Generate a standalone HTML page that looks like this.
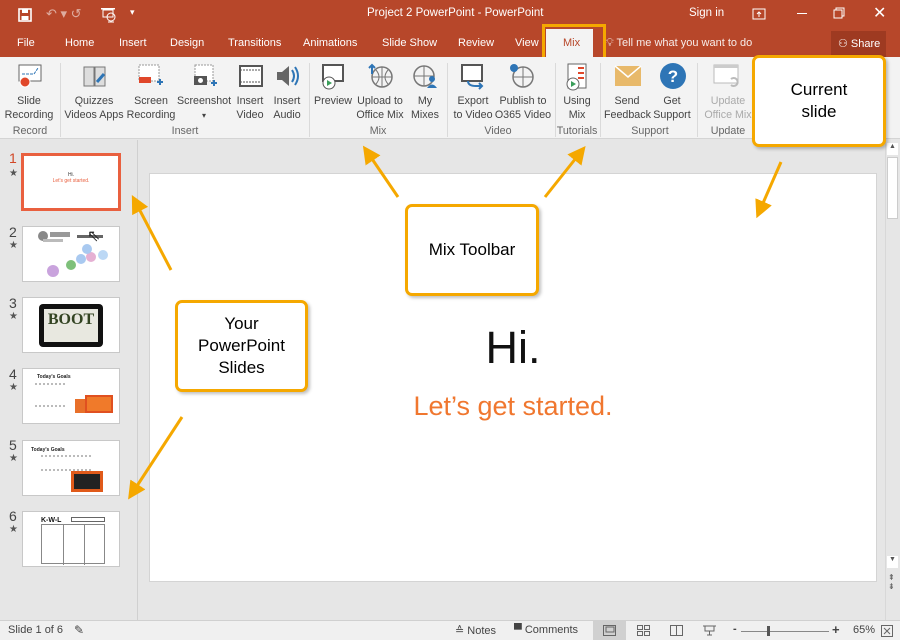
<!DOCTYPE html>
<html><head><meta charset="utf-8"><style>
*{margin:0;padding:0;box-sizing:border-box}
body{width:900px;height:640px;overflow:hidden;background:#e6e6e6;font-family:"Segoe UI","Liberation Sans",sans-serif;position:relative;color:#444}
.a{position:absolute}
#top{left:0;top:0;width:900px;height:57px;background:#b7472a;color:#fff}
.t{position:absolute;font-size:11px;color:#fff;white-space:nowrap}
#rib{left:0;top:57px;width:900px;height:82px;background:#f3f3f3;border-bottom:1px solid #d4d4d4}
.lb{position:absolute;font-size:10.7px;color:#444;text-align:center;line-height:14px;white-space:nowrap}
.gl{position:absolute;top:68px;font-size:10.7px;color:#666;text-align:center}
.sep{position:absolute;top:6px;width:1px;height:74px;background:#dadada}
.ic{position:absolute}
.callout{position:absolute;background:#fff;border:3px solid #f5a800;border-radius:7px;box-shadow:2px 2px 3px rgba(0,0,0,.25);font-family:"Liberation Sans",sans-serif;color:#000;font-size:17px;text-align:center;display:flex;align-items:center;justify-content:center;line-height:22px}
.th{position:absolute;left:22px;width:98px;height:56px;background:#fff;border:1px solid #c8c8c8}
.num{position:absolute;left:9px;font-size:14px;color:#444}
.star{position:absolute;left:9px;font-size:10px;color:#555}
#status{left:0;top:620px;width:900px;height:20px;background:#f0f0f0;border-top:1px solid #d0d0d0;font-size:11px;color:#444}
</style></head><body>
<div id="top" class="a">
 <svg class="a" style="left:18px;top:8px" width="14" height="14"><rect x="1" y="1" width="12" height="12" fill="none" stroke="#fff" stroke-width="1.6"/><rect x="4" y="1" width="6" height="4" fill="#fff"/><rect x="3.5" y="8" width="7" height="4" fill="#fff"/></svg>
 <div class="t" style="left:46px;top:6px;opacity:.55;font-size:13px">↶ ▾ ↺</div>
 <svg class="a" style="left:100px;top:7px" width="16" height="16"><rect x="1" y="1" width="14" height="1.5" fill="#fff"/><rect x="3" y="3" width="10" height="7" fill="none" stroke="#fff"/><circle cx="11" cy="10" r="4" fill="none" stroke="#fff"/><path d="M8 15h6" stroke="#fff"/></svg>
 <div class="t" style="left:130px;top:7px;font-size:9px">▾</div>
 <div class="t" style="left:367px;top:7px;font-size:11.5px">Project 2 PowerPoint  -  PowerPoint</div>
 <div class="t" style="left:689px;top:7px;font-size:11.5px">Sign in</div>
 <svg class="a" style="left:752px;top:8px" width="14" height="12"><rect x="1" y="1" width="12" height="10" fill="none" stroke="#fff"/><path d="M7 9V4M5 6l2-2 2 2" stroke="#fff" fill="none"/></svg>
 <div class="a" style="left:797px;top:13px;width:10px;height:1px;background:#fff"></div>
 <svg class="a" style="left:833px;top:7px" width="12" height="12"><rect x="1" y="3" width="8" height="8" fill="none" stroke="#fff"/><path d="M3 3V1h8v8H9" fill="none" stroke="#fff"/></svg>
 <div class="t" style="left:873px;top:3px;font-size:16px">✕</div>
 <div class="t" style="left:17px;top:37px">File</div>
 <div class="t" style="left:65px;top:37px">Home</div>
 <div class="t" style="left:119px;top:37px">Insert</div>
 <div class="t" style="left:170px;top:37px">Design</div>
 <div class="t" style="left:228px;top:37px">Transitions</div>
 <div class="t" style="left:303px;top:37px">Animations</div>
 <div class="t" style="left:382px;top:37px">Slide Show</div>
 <div class="t" style="left:458px;top:37px">Review</div>
 <div class="t" style="left:515px;top:37px">View</div>
 <div class="a" style="left:546px;top:29px;width:47px;height:28px;background:#f3f3f3"></div>
 <div class="t" style="left:563px;top:37px;color:#b7472a">Mix</div>
 <div class="t" style="left:606px;top:37px;opacity:.9">💡︎ Tell me what you want to do</div>
 <div class="a" style="left:831px;top:31px;width:55px;height:26px;background:#9e3a21"></div>
 <div class="t" style="left:838px;top:37px">⚇ Share</div>
</div>
<div class="a" style="left:542px;top:24px;width:64px;height:36px;border:3px solid #f5a800"></div>

<div id="rib" class="a">
 <svg class="ic" style="left:17px;top:6px" width="26" height="26"><rect x="2" y="2" width="22" height="16" fill="#fff" stroke="#666"/><path d="M5 11h12l4-6" stroke="#2e75b6" fill="none" stroke-dasharray="3 1"/><circle cx="8" cy="19" r="5" fill="#e0472a" stroke="#fff"/></svg>
 <svg class="ic" style="left:82px;top:7px" width="26" height="24"><path d="M2 3h10v19H2zM13 3h10v19H13z" fill="#ddd" stroke="#777"/><path d="M15 18l7-8" stroke="#2e75b6" stroke-width="3"/></svg>
 <svg class="ic" style="left:137px;top:7px" width="26" height="24"><rect x="2" y="1" width="20" height="16" fill="#fff" stroke="#999" stroke-dasharray="2 1"/><rect x="2" y="13" width="12" height="6" fill="#e0472a"/><path d="M20 18h6M23 15v6" stroke="#2e75b6" stroke-width="2"/></svg>
 <svg class="ic" style="left:192px;top:7px" width="26" height="24"><rect x="3" y="1" width="18" height="16" fill="#fff" stroke="#999" stroke-dasharray="2 1"/><rect x="2" y="12" width="13" height="9" fill="#555"/><circle cx="8.5" cy="16.5" r="2.5" fill="#fff"/><path d="M19 19h6M22 16v6" stroke="#2e75b6" stroke-width="2"/></svg>
 <svg class="ic" style="left:239px;top:8px" width="24" height="22"><rect x="1" y="1" width="22" height="20" fill="#fff" stroke="#555" stroke-width="2"/><path d="M1 5h22M1 17h22" stroke="#555" stroke-dasharray="2 1"/></svg>
 <svg class="ic" style="left:275px;top:6px" width="26" height="26"><path d="M2 9h5l7-6v20l-7-6H2z" fill="#666"/><path d="M17 7q4 6 0 12M20 4q6 9 0 18" stroke="#2e75b6" stroke-width="2" fill="none"/></svg>
 <svg class="ic" style="left:321px;top:7px" width="24" height="26"><rect x="2" y="1" width="20" height="16" fill="#fff" stroke="#555" stroke-width="2"/><circle cx="8" cy="19" r="6" fill="#fff" stroke="#555"/><path d="M6 16v6l5-3z" fill="#3a9e5a"/></svg>
 <svg class="ic" style="left:367px;top:6px" width="26" height="26"><circle cx="15" cy="14" r="10" fill="none" stroke="#777" stroke-width="1.5"/><path d="M5 14h20M15 4v20M9 7q6 7 0 14M21 7q-6 7 0 14" stroke="#777" fill="none"/><path d="M5 11V2M2 5l3-3 3 3" stroke="#2e75b6" stroke-width="2" fill="none"/></svg>
 <svg class="ic" style="left:412px;top:6px" width="26" height="26"><circle cx="12" cy="13" r="10" fill="none" stroke="#777" stroke-width="1.5"/><path d="M2 13h20M12 3v20" stroke="#777"/><circle cx="20" cy="16" r="3" fill="#2e75b6"/><path d="M15 25q5-7 10 0z" fill="#2e75b6"/></svg>
 <svg class="ic" style="left:460px;top:7px" width="26" height="26"><rect x="2" y="1" width="20" height="16" fill="#fff" stroke="#555" stroke-width="2"/><path d="M8 17q0 5 8 5h6M19 19l3 3-3 3" stroke="#2e75b6" stroke-width="2" fill="none"/></svg>
 <svg class="ic" style="left:508px;top:6px" width="26" height="26"><circle cx="15" cy="14" r="10" fill="none" stroke="#777" stroke-width="1.5"/><path d="M5 14h20M15 4v20" stroke="#777"/><circle cx="6" cy="5" r="4" fill="#2e75b6"/></svg>
 <svg class="ic" style="left:565px;top:6px" width="24" height="28"><rect x="3" y="1" width="18" height="24" fill="#fff" stroke="#666"/><path d="M13 5h6M13 10h6M13 15h6" stroke="#e0472a" stroke-width="2"/><circle cx="8" cy="21" r="6" fill="#fff" stroke="#666"/><path d="M6 18v6l5-3z" fill="#3a9e5a"/></svg>
 <svg class="ic" style="left:614px;top:8px" width="28" height="22"><rect x="1" y="1" width="26" height="20" fill="#e8b96a"/><path d="M1 1l13 11L27 1" stroke="#fff" fill="none" stroke-width="1.5"/></svg>
 <svg class="ic" style="left:659px;top:5px" width="28" height="28"><circle cx="14" cy="14" r="13" fill="#2e75b6"/><text x="14" y="20" font-size="17" font-weight="bold" text-anchor="middle" fill="#fff" font-family="Liberation Sans">?</text></svg>
 <svg class="ic" style="left:713px;top:7px" width="28" height="26"><rect x="1" y="1" width="24" height="18" fill="#fff" stroke="#bbb"/><rect x="1" y="1" width="24" height="3" fill="#ccc"/><path d="M18 15a4 4 0 1 1 0 6" stroke="#bbb" stroke-width="2" fill="none"/></svg>
 <div class="lb" style="left:4px;top:37px;width:50px">Slide<br>Recording</div>
 <div class="lb" style="left:64px;top:37px;width:60px">Quizzes<br>Videos Apps</div>
 <div class="lb" style="left:124px;top:37px;width:54px">Screen<br>Recording</div>
 <div class="lb" style="left:177px;top:37px;width:54px">Screenshot<br><span style="font-size:8px">▾</span></div>
 <div class="lb" style="left:235px;top:37px;width:30px">Insert<br>Video</div>
 <div class="lb" style="left:271px;top:37px;width:32px">Insert<br>Audio</div>
 <div class="lb" style="left:314px;top:37px;width:38px">Preview</div>
 <div class="lb" style="left:354px;top:37px;width:52px">Upload to<br>Office Mix</div>
 <div class="lb" style="left:409px;top:37px;width:32px">My<br>Mixes</div>
 <div class="lb" style="left:450px;top:37px;width:46px">Export<br>to Video</div>
 <div class="lb" style="left:494px;top:37px;width:58px">Publish to<br>O365 Video</div>
 <div class="lb" style="left:560px;top:37px;width:34px">Using<br>Mix</div>
 <div class="lb" style="left:604px;top:37px;width:46px">Send<br>Feedback</div>
 <div class="lb" style="left:650px;top:37px;width:44px">Get<br>Support</div>
 <div class="lb" style="left:702px;top:37px;width:52px;color:#aaa">Update<br>Office Mix</div>
 <div class="gl" style="left:10px;width:40px">Record</div>
 <div class="gl" style="left:160px;width:50px">Insert</div>
 <div class="gl" style="left:365px;width:26px">Mix</div>
 <div class="gl" style="left:478px;width:40px">Video</div>
 <div class="gl" style="left:555px;width:44px">Tutorials</div>
 <div class="gl" style="left:628px;width:44px">Support</div>
 <div class="gl" style="left:706px;width:44px">Update</div>
 <div class="sep" style="left:60px"></div><div class="sep" style="left:309px"></div><div class="sep" style="left:447px"></div><div class="sep" style="left:555px"></div><div class="sep" style="left:600px"></div><div class="sep" style="left:697px"></div>
</div>

<div class="a" style="left:137px;top:140px;width:1px;height:480px;background:#d0d0d0"></div>
<div class="a" style="left:0;top:140px;width:137px;height:480px;background:#e6e6e6"></div>
<div class="num" style="top:150px;color:#d24726">1</div><div class="star" style="top:168px">★</div>
<div class="th" style="left:21px;top:153px;width:100px;height:58px;border:3px solid #e9603f;text-align:center;font-size:5px;color:#333;padding-top:16px;font-family:'Liberation Sans'">Hi.<br><span style="color:#e9603f">Let's get started.</span></div>
<div class="num" style="top:224px">2</div><div class="star" style="top:240px">★</div>
<div class="th" style="top:226px"><svg width="96" height="54"><circle cx="20" cy="9" r="5" fill="#888"/><rect x="27" y="5" width="20" height="5" fill="#999"/><rect x="20" y="12" width="20" height="3" fill="#bbb"/><rect x="54" y="8" width="26" height="3" fill="#666"/><circle cx="30" cy="44" r="6" fill="#c9a3dd"/><circle cx="48" cy="38" r="5" fill="#7ec07a"/><circle cx="58" cy="32" r="5" fill="#a9c9f0"/><circle cx="68" cy="30" r="5" fill="#e5b0d3"/><circle cx="80" cy="28" r="5" fill="#bcd8f5"/><circle cx="64" cy="22" r="5" fill="#a9c9f0"/></svg></div>
<div class="a" style="left:87px;top:226px;font-size:16px;color:#222">⇖</div>
<div class="num" style="top:295px">3</div><div class="star" style="top:311px">★</div>
<div class="th" style="top:297px"><div class="a" style="left:16px;top:6px;width:64px;height:43px;background:#111;border-radius:4px;padding:5px"><div style="background:#e8e8e0;width:100%;height:100%;font:bold 16px 'Liberation Serif';color:#334422;text-align:center;line-height:22px">BOOT</div></div></div>
<div class="num" style="top:366px">4</div><div class="star" style="top:382px">★</div>
<div class="th" style="top:368px"><div class="a" style="left:14px;top:5px;font-size:5px;font-weight:bold;color:#222">Today's Goals</div><div class="a" style="left:12px;top:14px;width:30px;height:24px;border-top:2px dotted #bbb;border-bottom:2px dotted #bbb"></div><div class="a" style="left:52px;top:30px;width:26px;height:14px;background:#e8702a"></div><div class="a" style="left:62px;top:26px;width:28px;height:18px;background:#f07a2a;border:2px solid #e05020"></div></div>
<div class="num" style="top:437px">5</div><div class="star" style="top:453px">★</div>
<div class="th" style="top:440px"><div class="a" style="left:8px;top:6px;font-size:5px;font-weight:bold;color:#222">Today's Goals</div><div class="a" style="left:18px;top:14px;width:50px;height:16px;border-top:2px dotted #bbb;border-bottom:2px dotted #bbb"></div><div class="a" style="left:48px;top:30px;width:32px;height:21px;background:#e05a1a;padding:3px"><div style="background:#222;height:100%"></div></div></div>
<div class="num" style="top:508px">6</div><div class="star" style="top:524px">★</div>
<div class="th" style="top:511px"><div class="a" style="left:18px;top:5px;font:bold 7px 'Liberation Sans';color:#111">K-W-L</div><div class="a" style="left:48px;top:5px;width:34px;height:5px;border:1px solid #666"></div><div class="a" style="left:18px;top:12px;width:64px;height:40px;border:1px solid #888"><div class="a" style="left:21px;top:0;width:1px;height:40px;background:#888"></div><div class="a" style="left:42px;top:0;width:1px;height:40px;background:#888"></div></div></div>

<div class="a" style="left:149px;top:173px;width:728px;height:409px;background:#fff;border:1px solid #d4d4d4"></div>
<div class="a" style="left:149px;top:322px;width:728px;text-align:center;font-family:'Liberation Sans',sans-serif;font-size:45px;color:#111">Hi.</div>
<div class="a" style="left:149px;top:391px;width:728px;text-align:center;font-family:'Liberation Sans',sans-serif;font-size:27px;color:#f0772f">Let’s get started.</div>

<div class="a" style="left:885px;top:140px;width:15px;height:480px;background:#e6e6e6;border-left:1px solid #d8d8d8"></div>
<div class="a" style="left:887px;top:143px;width:11px;height:12px;background:#fff;font-size:7px;text-align:center;color:#555">▲</div>
<div class="a" style="left:887px;top:157px;width:11px;height:62px;background:#fff;border:1px solid #ccc"></div>
<div class="a" style="left:887px;top:556px;width:11px;height:12px;background:#fff;font-size:7px;text-align:center;color:#555">▼</div>
<div class="a" style="left:888px;top:573px;font-size:8px;color:#555;line-height:9px">⇞<br>⇟</div>

<div id="status" class="a">
 <div class="a" style="left:8px;top:3px">Slide 1 of 6</div>
 <div class="a" style="left:74px;top:2px;font-size:12px">✎</div>
 <div class="a" style="left:455px;top:3px">≙ Notes</div>
 <div class="a" style="left:514px;top:3px">▀ Comments</div>
 <div class="a" style="left:593px;top:0;width:33px;height:19px;background:#d0d0d0"></div>
 <svg class="a" style="left:603px;top:4px" width="13" height="11"><rect x=".5" y=".5" width="12" height="10" fill="none" stroke="#666"/><rect x="3" y="2" width="8" height="5" fill="none" stroke="#666"/></svg>
 <svg class="a" style="left:637px;top:4px" width="13" height="11"><rect x=".5" y=".5" width="5" height="4" fill="none" stroke="#666"/><rect x="7.5" y=".5" width="5" height="4" fill="none" stroke="#666"/><rect x=".5" y="6.5" width="5" height="4" fill="none" stroke="#666"/><rect x="7.5" y="6.5" width="5" height="4" fill="none" stroke="#666"/></svg>
 <svg class="a" style="left:670px;top:4px" width="13" height="11"><rect x=".5" y=".5" width="12" height="10" fill="none" stroke="#666"/><path d="M6.5 0v11" stroke="#666"/></svg>
 <svg class="a" style="left:703px;top:4px" width="13" height="11"><path d="M0 1h13M2 1v5h9V1M6.5 6v4M4 10h5" stroke="#666" fill="none"/></svg>
 <div class="a" style="left:733px;top:2px;font-weight:bold">-</div>
 <div class="a" style="left:741px;top:10px;width:88px;height:1px;background:#888"></div>
 <div class="a" style="left:767px;top:5px;width:3px;height:10px;background:#555"></div>
 <div class="a" style="left:832px;top:1px;font-weight:bold;font-size:13px">+</div>
 <div class="a" style="left:853px;top:3px">65%</div>
 <svg class="a" style="left:881px;top:4px" width="12" height="12"><rect x=".5" y=".5" width="11" height="11" fill="none" stroke="#666"/><path d="M3 3l6 6M9 3l-6 6" stroke="#666"/></svg>
</div>

<div class="callout" style="left:752px;top:55px;width:134px;height:92px">Current<br>slide</div>
<div class="callout" style="left:405px;top:204px;width:134px;height:92px">Mix Toolbar</div>
<div class="callout" style="left:175px;top:300px;width:133px;height:92px">Your<br>PowerPoint<br>Slides</div>

<svg class="a" style="left:0;top:0" width="900" height="640">
<defs><marker id="m" markerWidth="6" markerHeight="6" refX="3" refY="3" orient="auto"><path d="M0 0L6 3L0 6z" fill="#f5a800"/></marker></defs>
<g stroke="#f5a800" stroke-width="3" fill="none" marker-end="url(#m)">
<path d="M398 197L368 153"/>
<path d="M545 197L580 153"/>
<path d="M781 162L760 210"/>
<path d="M171 270L136 203"/>
<path d="M182 417L133 492"/>
</g></svg>
</body></html>
